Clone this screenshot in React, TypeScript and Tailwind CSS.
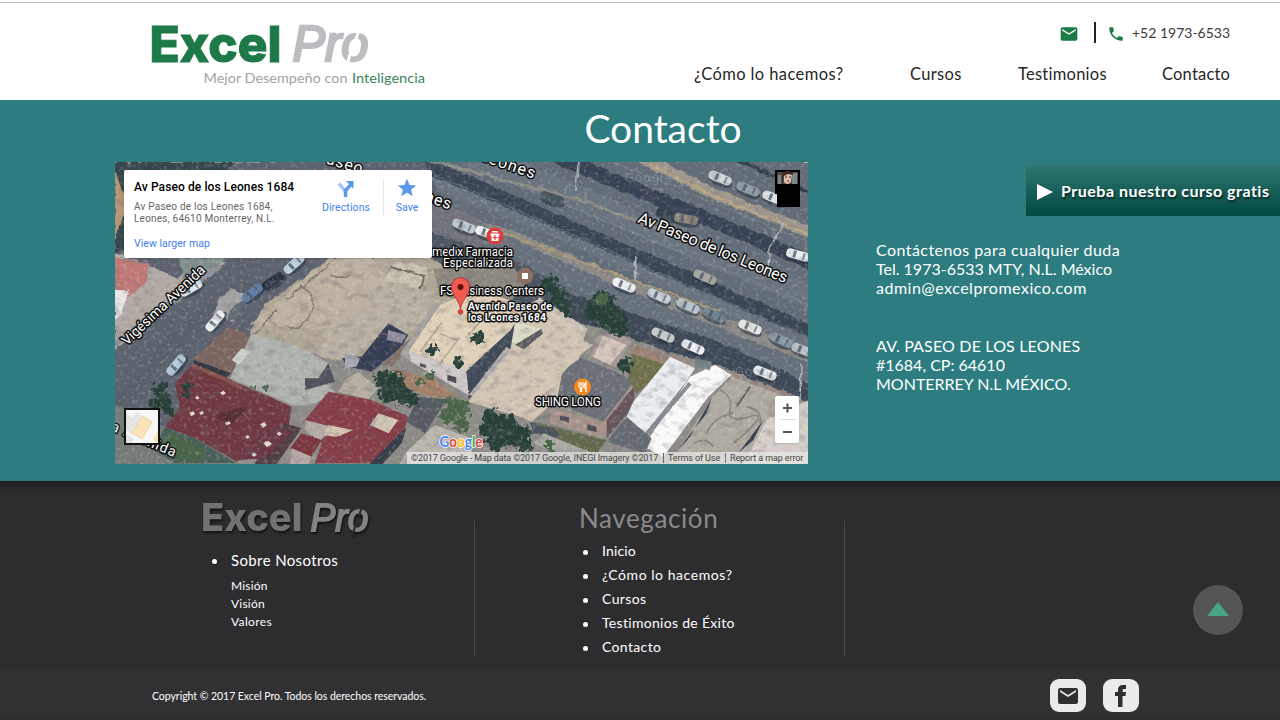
import React from "react";
import { MdEmail, MdPhone, MdStar } from "react-icons/md";

function Logo() {
  return (
    <svg width="276" height="70" viewBox="152 20 276 70" className="block overflow-visible" role="img" aria-label="Excel Pro">
      <text x="149.500" y="61.500" fontFamily="Inter, sans-serif" fontWeight="800" fontSize="49.500" fill="#1d7a48" stroke="#1d7a48" strokeWidth="1" textLength="132" lengthAdjust="spacingAndGlyphs">Excel</text>
      <text x="292.500" y="61" fontFamily="'Liberation Sans', sans-serif" fontStyle="italic" fontSize="50.500" fill="#bcbdc0" stroke="#bcbdc0" strokeWidth="2.600" textLength="76" lengthAdjust="spacingAndGlyphs">Pro</text>
      <path d="M359 30 L355 42 M350 54 L347 66" stroke="#fff" strokeWidth="3" />
      <text x="203.500" y="83" fontFamily="Lato, sans-serif" fontSize="14" fill="#a3a3a3" textLength="144" lengthAdjust="spacingAndGlyphs">Mejor Desempeño con</text>
      <text x="352" y="83" fontFamily="Lato, sans-serif" fontSize="14" fill="#3e8460" textLength="73" lengthAdjust="spacingAndGlyphs">Inteligencia</text>
    </svg>
  );
}

function FooterLogo() {
  return (
    <svg width="172" height="38" viewBox="200 498 172 38" className="block overflow-visible [filter:drop-shadow(1px_2px_1px_rgba(0,0,0,0.6))]" role="img" aria-label="Excel Pro">
      <text x="201" y="531" fontFamily="Inter, sans-serif" fontWeight="800" fontSize="38.500" fill="#727272" textLength="101.500" lengthAdjust="spacingAndGlyphs">Excel</text>
      <text x="310.500" y="531" fontFamily="'Liberation Sans', sans-serif" fontStyle="italic" fontSize="39" fill="#838383" stroke="#838383" strokeWidth="1.8" textLength="58" lengthAdjust="spacingAndGlyphs">Pro</text>
      <path d="M362 507 L359 516 M355 526 L353 535" stroke="#2d2d2f" strokeWidth="2.2" />
    </svg>
  );
}

const cars: [number, number, number, string][] = [
  [552, 198, 18, "#48575c"], [668, 214, 18, "#35424c"], [686, 219, 10, "#8c8579"],
  [720, 178, 22, "#d4d9dc"], [748, 189, 22, "#8f9ca3"], [774, 198, 22, "#dfe3e5"],
  [798, 255, 15, "#e8ebee"], [705, 277, 24, "#a5a49f"], [624, 285, 22, "#eef0f2"],
  [659, 296, 24, "#ccd4da"], [688, 306, 24, "#b9c4cc"], [714, 315, 24, "#718390"],
  [663, 335, 24, "#c5c9cb"], [693, 347, 24, "#edf0f2"], [750, 327, 22, "#e5e6e4"],
  [781, 340, 24, "#8b98a3"], [765, 373, 22, "#f0f2f3"], [464, 226, 22, "#bfc9d0"],
  [487, 233, 20, "#f2f3f3"], [803, 350, 20, "#b7c0c7"],
];

const leftCars: [number, number, number, string][] = [
  [191, 288, -30, "#e3e5e8"], [215, 321, -50, "#eceeef"], [176, 365, -50, "#b5cbd9"],
  [294, 264, -42, "#bed3df"], [252, 293, -38, "#5f7fa6"], [273, 281, -35, "#26303c"],
];

function Car({ x, y, a, c }: { x: number; y: number; a: number; c: string }) {
  return (
    <g transform={`translate(${x} ${y}) rotate(${a})`}>
      <ellipse cx="1" cy="3" rx="13" ry="5" fill="#20303d" opacity=".55" />
      <rect x="-12" y="-4.500" width="24" height="9" rx="4" fill={c} />
      <rect x="-5" y="-3.500" width="3" height="7" fill="#40515e" opacity=".75" />
      <rect x="5" y="-3.500" width="2" height="7" fill="#40515e" opacity=".6" />
    </g>
  );
}

function Trees({ points, color }: { points: number[][]; color: string }) {
  return (
    <g fill={color}>
      {points.map(([x, y, r], i) => (
        <circle key={i} cx={x} cy={y} r={r} />
      ))}
    </g>
  );
}

function Satellite() {
  return (
    <svg width="693" height="302" viewBox="115 162 693 302" className="block">
      <defs>
        <filter id="rough" x="0" y="0" width="100%" height="100%">
          <feTurbulence type="fractalNoise" baseFrequency="0.12" numOctaves="3" seed="4" result="n" />
          <feDisplacementMap in="SourceGraphic" in2="n" scale="5" xChannelSelector="R" yChannelSelector="G" />
          <feGaussianBlur stdDeviation=".4" />
        </filter>
        <filter id="leaf" x="-10%" y="-10%" width="120%" height="120%">
          <feTurbulence type="fractalNoise" baseFrequency="0.2" numOctaves="3" seed="9" result="n" />
          <feDisplacementMap in="SourceGraphic" in2="n" scale="14" xChannelSelector="R" yChannelSelector="G" />
        </filter>
        <filter id="grainDark" x="0" y="0" width="100%" height="100%">
          <feTurbulence type="fractalNoise" baseFrequency="0.09 0.14" numOctaves="5" seed="8" />
          <feColorMatrix values="0 0 0 0 0.14  0 0 0 0 0.13  0 0 0 0 0.16  0 3 0 0 -1.45" />
        </filter>
        <filter id="grainLight" x="0" y="0" width="100%" height="100%">
          <feTurbulence type="fractalNoise" baseFrequency="0.25" numOctaves="3" seed="21" />
          <feColorMatrix values="0 0 0 0 1  0 0 0 0 0.97  0 0 0 0 0.92  0 3 0 0 -1.6" />
        </filter>
      </defs>
      <g filter="url(#rough)">
        <rect x="105" y="152" width="713" height="322" fill="#8d8c87" />

        <path d="M300 152 H818 V420 L650 345 L540 290 L420 225 L280 175Z" fill="#626d78" />
        <path d="M470 152 L818 300" stroke="#6a7580" strokeWidth="24" />
        <path d="M360 152 L540 222 L818 345" fill="none" stroke="#6a7480" strokeWidth="18" />
        <path d="M385 147 L818 335" stroke="#384454" strokeWidth="14" />
        <path d="M545 152 L818 265" stroke="#374354" strokeWidth="14" />
        <path d="M722 152 L818 197" stroke="#33414c" strokeWidth="4" />
        <path d="M430 160 L580 200 L700 244" fill="none" stroke="#8c8c86" strokeWidth="3" />
        <path d="M630 152 L715 194 L818 235" fill="none" stroke="#a0988c" strokeWidth="11" />
        <path d="M630 154 L715 197 L818 238" fill="none" stroke="#c4a97f" strokeWidth="1.5" />
        <path d="M760 152 L818 165 V152Z" fill="#c5b499" />
        <path d="M430 150 L818 308 M430 172 L818 342 M590 152 L818 246" stroke="#8a959b" strokeWidth="1" opacity=".6" />
        <path d="M430 210 L515 238 L600 274 L690 310 L818 360" fill="none" stroke="#8b8a86" strokeWidth="12" />
        <path d="M500 232 L600 268 L720 312" fill="none" stroke="#ab9a7c" strokeWidth="2" />
        <path d="M500 243 L600 289 L818 380" fill="none" stroke="#66717c" strokeWidth="19" />
        <path d="M520 280 L590 300 L720 342 L818 388 V406 L700 362 L600 328 L525 310Z" fill="#3e4957" />
        <path d="M625 346 L720 370 L818 409" fill="none" stroke="#958a84" strokeWidth="8" />
        <path d="M578 162 L576 191 M784 223 L769 249 L768 272 M636 257 L634 280 M801 364 L800 400" fill="none" stroke="#b3b8ba" strokeWidth="1.5" />

        <path d="M115 162 H425 L460 240 L375 270 L270 330 L190 400 L145 464 H105 V162Z" fill="#5c646e" />
        <path d="M115 162 H235 L150 235 L115 255Z" fill="#354448" />
        <path d="M115 170 L127 205 L115 240Z" fill="#b39472" />
        <path d="M340 162 L470 215 L520 247 L450 242 L410 230Z" fill="#6f737a" />
        <path d="M432 232 L530 268 L560 290 L520 320 L430 275Z" fill="#4c5561" />
        <path d="M115 253 L150 266 L178 278 L200 260 L225 262 L115 350Z" fill="#b1aaa4" />
        <path d="M115 257 L148 264 L146 282 L115 308Z" fill="#c07a76" />
        <path d="M115 290 L130 290 L120 315 L115 320Z" fill="#e8e6e9" />
        <path d="M178 258 H226 L215 267 L185 280Z" fill="#7f908e" />
        <path d="M115 345 L175 300 L220 265" stroke="#8e9296" strokeWidth="6" fill="none" />
        <path d="M115 410 L170 345 L250 282" stroke="#58616c" strokeWidth="15" fill="none" />
        <path d="M115 405 L200 442 L210 464 H105Z" fill="#767b79" />

        <path d="M330 258 H432 L465 283 L455 314 L392 350 L331 360 L250 334 L264 305 L306 276Z" fill="#b0a797" />
        <path d="M322 264 L370 255 L389 282 L345 330 L250 325Z" fill="#beb3a2" />
        <path d="M370 292 L392 282 L437 292 L420 325 L384 349 L322 335Z" fill="#b9b0a3" />
        <path d="M382 282 L396 261 L426 267 L427 278 L419 291 L397 282Z" fill="#cbc2b2" />
        <path d="M390 267 L425 276 L420 289" fill="none" stroke="#6c6960" strokeWidth="2" />
        <path d="M286 300 L330 264 M276 310 L250 340 M300 285 q20 10 10 30 t-25 10 M330 275 q15 5 20 0" fill="none" stroke="#817a70" strokeWidth="1.5" />
        <path d="M218 300 L232 289 L247 297 L232 322 L215 313Z" fill="#a0a3a2" />
        <path d="M232 308 L247 297 L238 316 L228 322Z" fill="#646c70" />
      </g>

      <g filter="url(#rough)" transform="translate(115 310) scale(.33333)">
        <path d="M340 50 L410 78 L350 190 L235 148Z" fill="#7b6561" />
        <path d="M235 150 L350 190 L335 203 L240 172Z" fill="#353840" />
        <path d="M410 70 L555 110 L640 160 L610 205 L660 245 L600 280 L540 288 L345 205Z" fill="#b0b4ae" />
        <path d="M350 150 L380 115 L405 125 L372 165Z" fill="#cbd0ca" />
        <path d="M640 160 L660 215 L570 240 L570 205 L610 205Z" fill="#4d535b" />
        <path d="M600 130 L680 30 L730 0 H940 L870 75 L820 45 L730 130 L680 150Z" fill="#b9b0a3" />
        <path d="M820 40 L880 75 L860 110 L770 185 L700 170 L680 145 L740 140Z" fill="#343c53" />
        <path d="M820 60 L875 75 L860 100 L815 90Z" fill="#8f8a9a" />
        <path d="M690 130 L735 145 L725 170 L690 175Z" fill="#a5a6af" />
        <path d="M880 90 L960 10 L975 25 L830 170 L800 165Z" fill="#85716c" />
        <path d="M230 165 L335 205 L440 250 L530 290 L520 355 L430 420 L365 455 L250 390 L150 350 L195 290 L180 220Z" fill="#70393f" />
        <path d="M230 165 L325 205 L380 235" fill="none" stroke="#85534f" strokeWidth="12" />
        <path d="M320 305 L385 290 L395 295 L355 340 L305 325" fill="#5a2d36" />
        <path d="M510 340 L560 355 L485 462 H420 L450 395Z" fill="#513c42" />
        <path d="M440 355 L530 365 L450 445 L370 450Z" fill="#6b3943" />
        <path d="M690 210 L730 185 L790 235 L760 267 L670 245Z" fill="#b6aea1" />
        <path d="M640 245 L770 270 L880 320 L860 380 L790 460 H600 L620 400 L570 330Z" fill="#853c46" />
        <path d="M570 330 L650 350 L615 395 L570 360Z" fill="#b5ada5" />
        <path d="M640 345 L715 360 L665 380 L625 376Z" fill="#d4c5b2" />
        <path d="M790 310 L850 330 L820 370 L765 345Z" fill="#d0c4b5" />
        <path d="M560 370 L620 390 L590 440 L525 415Z" fill="#7b343e" />
        <path d="M530 415 L590 440 L580 465 H525Z" fill="#b5a8a5" />
        <path d="M875 350 L860 400 L800 465 H760Z" fill="#353d48" />
        <path d="M835 175 L960 210 L1030 260 L960 265 L870 235Z" fill="#a48169" />
        <path d="M910 260 L995 268 L930 370 L875 335Z" fill="#555a61" />
        <path d="M960 345 L1070 385 V480 H845 L870 430Z" fill="#bbb7af" />
        <path d="M150 350 L250 390 L365 460 H180 L115 420Z" fill="#48605a" />
        <g fill="#e3d9ce">
          <path d="M315 248l10-6 8 8-10 6zM240 262l8-4 6 7-8 4zM222 310l12-6 7 7-12 8zM252 308l10-5 6 6-10 7zM330 338l13-4 4 7-12 5zM390 380l8-5 7 7-8 5zM410 432l7-5 9 7-9 6zM485 370l8-5 8 6-8 7zM445 400l14-8 12 9-15 11zM435 343l12-6 8 8-10 9z" />
        </g>
      </g>

      <g filter="url(#rough)" transform="translate(460 310) scale(.33333)">
        <path d="M150 110 L250 50 L400 105 L340 150 L290 270 L215 335 L30 255Z" fill="#d0c2b1" />
        <path d="M410 80 L460 65 L515 95 L465 170 L390 140Z" fill="#a89a96" />
        <path d="M430 77 L500 105 L450 165 L400 140Z" fill="#d3c6bb" />
        <path d="M350 138 L525 210 L430 335 L290 280 L305 195Z" fill="#6c7079" />
        <path d="M270 295 L430 335 L525 215 L520 255 L440 385 L270 340Z" fill="#a8948d" />
        <path d="M525 225 L520 290 L440 385 V330Z" fill="#67555b" />
        <path d="M300 317l27 5v16l-27-8zM382 343l28 7v16l-28-6z" fill="#4b4b55" />
        <path d="M515 130 L620 160 L570 220 L530 250 L505 205Z" fill="#70704c" />
        <path d="M530 105 L635 145 L620 165 L510 130Z" fill="#9b8373" />
        <path d="M630 140 L705 175 L675 220 L555 370 L495 330 L520 275Z" fill="#eaeef0" />
        <path d="M690 200 L765 165 L815 195 L745 260 L610 440 L550 410Z" fill="#fafafa" />
        <path d="M690 220 L580 350 L560 370" fill="none" stroke="#858c92" strokeWidth="12" />
        <path d="M500 320 L575 385 L555 430 L440 395Z" fill="#656b72" />
        <path d="M705 145 L755 155 L750 180 L705 170Z" fill="#758283" />
        <path d="M815 200 L1070 295 V480 H610 L680 380 L755 265Z" fill="#b0aba2" />
        <path d="M1070 260 L920 330 L850 465 H1070Z" fill="#d6cec9" />
        <path d="M755 265 L690 380 L645 430 L740 310Z M910 330 L880 390 L835 430Z" fill="#39414b" />
        <path d="M870 230 L830 290" stroke="#66645e" strokeWidth="6" />
        <path d="M780 240 q40 20 30 60 t60 20 t-50 80 M820 310 q-60 10 -80 60 M860 290 q50 10 40 50 M700 400 q40 -20 60 10" fill="none" stroke="#8a867e" strokeWidth="5" />
        <path d="M220 335 L440 390 L410 430 L290 400Z" fill="#63694c" />
        <path d="M210 335 L290 360 L300 385 L220 370Z" fill="#4c525d" />
        <path d="M250 370 L390 425 H280 L220 400Z" fill="#aaa8a3" />
      </g>

      <g filter="url(#rough)" transform="translate(115 162) scale(.442 .33333)">
        <path d="M720 320 L900 310 L930 380 L870 440 L735 400Z" fill="#8d887f" />
        <path d="M890 545 L870 470 L960 410 L1065 510 L1050 590 L1000 640 L990 710 L945 775 L800 720Z" fill="#d2c5b4" />
        <path d="M885 500 L905 480 L965 500 L930 550 L890 540Z" fill="#dcdcc8" />
        <path d="M905 548 L965 500 L968 515 L925 562Z" fill="#5a5c5e" />
        <path d="M960 405 L1070 500 L1065 515 L955 420Z" fill="#c8c1b7" />
        <path d="M795 625 L905 480 L895 560 L800 712Z" fill="#3f4858" />
        <path d="M885 555 L895 562 L812 700 L800 700Z" fill="#b6b2b2" />
        <path d="M870 405 L930 430 L895 505 L795 627 L664 567 L735 430 L785 400Z" fill="#e0d1ba" />
        <path d="M868 412 L928 436 L905 455 L850 430Z" fill="#caa995" />
        <path d="M664 567 L795 627 L800 700 L670 600Z" fill="#cfcac7" />
        <path d="M690 570 L740 480 M735 605 L775 535 L735 515 M800 520 L850 440" fill="none" stroke="#b8a993" strokeWidth="4" />
        <path d="M752 638l20 8v18l-20-9zM690 603l14 6v10l-14-6z" fill="#4d4a56" />
        <path d="M645 575 L725 420 L735 428 L664 567 L670 600Z" fill="#a6a29f" />
      </g>

      <g filter="url(#leaf)">
        <Trees color="#273f38" points={[[187, 384, 4], [187, 392, 5], [163, 385, 4], [158, 390, 6], [165, 398, 7], [155, 405, 7], [168, 410, 6], [383, 380, 9], [393, 385, 12], [387, 393, 9], [401, 394, 10], [412, 398, 8], [433, 350, 5], [477, 338, 6], [458, 363, 5], [491, 418, 9], [505, 425, 12], [489, 431, 10], [512, 435, 12], [522, 435, 9], [497, 442, 9], [525, 445, 8], [597, 311, 12], [612, 317, 13], [603, 301, 11], [618, 327, 9], [560, 297, 9], [550, 285, 9], [566, 308, 7], [625, 366, 7]]} />
        <Trees color="#4a6547" points={[[453, 405, 8], [448, 415, 8], [463, 410, 8], [461, 424, 7], [172, 440, 8], [185, 450, 11], [198, 453, 8], [252, 388, 3], [265, 388, 3], [420, 382, 5], [598, 302, 5], [603, 298, 5], [550, 446, 5], [430, 376, 4]]} />
      </g>

      <g>
        {cars.map(([x, y, a, c], i) => (
          <Car key={i} x={x} y={y} a={a} c={c} />
        ))}
        {leftCars.map(([x, y, a, c], i) => (
          <Car key={i} x={x} y={y} a={a} c={c} />
        ))}
      </g>
      <rect x="115" y="162" width="693" height="302" filter="url(#grainDark)" opacity=".32" />
      <rect x="115" y="162" width="693" height="302" filter="url(#grainLight)" opacity=".22" />

      <g fontFamily="Roboto, sans-serif" fill="#fff" stroke="#111" paintOrder="stroke" strokeLinejoin="round" strokeWidth="3">
        <text transform="translate(637 222) rotate(22.500)" fontSize="16" textLength="160">Av Paseo de los Leones</text>
        <text transform="translate(450 150) rotate(19)" fontSize="16" textLength="88">los Leones</text>
        <text transform="translate(315 160) rotate(17)" fontSize="16" textLength="48">Paseo</text>
        <text transform="translate(384 187) rotate(19)" fontSize="16" textLength="69">s Leones</text>
        <text transform="translate(127 346) rotate(-43.500)" fontSize="14" textLength="109">Vigésima Avenida</text>
        <text transform="translate(103 427) rotate(23)" fontSize="14" textLength="77">za Avenida</text>
        <g fontSize="12">
          <text x="432" y="255.500" textLength="81">medix Farmacia</text>
          <text x="443" y="267" textLength="70">Especializada</text>
          <text x="440" y="295" textLength="104">FS Business Centers</text>
          <text x="535" y="406" textLength="66">SHING LONG</text>
        </g>
        <g fontSize="10.500" fontWeight="700">
          <text x="468" y="310" textLength="84">Avenida Paseo de</text>
          <text x="468" y="321" textLength="78">los Leones 1684</text>
        </g>
      </g>
      <g fontFamily="Roboto, sans-serif" fontSize="13" fill="#a5b6c0" opacity=".35">
        <text x="625" y="182" letterSpacing="1">Google</text>
        <text x="735" y="376" letterSpacing="1">Google</text>
      </g>

      <circle cx="495" cy="236" r="8.500" fill="#e0393a" />
      <path d="M490.500 233.500h9v2l-1 1v4.500h-7v-4.500l-1-1zM492 231h6v1.500h-6z" fill="#fff" />
      <path d="M495 235v5M492.500 237.500h5" stroke="#e0393a" strokeWidth="1.2" />
      <circle cx="525" cy="276" r="8.300" fill="#8d6e63" />
      <rect x="522" y="273" width="6" height="6" fill="#fff" />
      <circle cx="582.500" cy="387" r="8.500" fill="#f5871f" />
      <path d="M579 382v4q0 1.500 1.500 1.500V392M581 382v4M583 382v4q0 1.500-1.500 1.500V392M586 392v-10q-2 2-2 6h2" stroke="#fff" strokeWidth="1.2" fill="none" />

      <path d="M460.500 309 C459.500 300 451.500 296 451.500 286.500 a9 9 0 0 1 18 0 C469.500 296 461.500 300 460.500 309Z" fill="#f15a4e" stroke="#a52a28" strokeWidth=".8" />
      <circle cx="460.500" cy="287" r="3" fill="#5b1310" />
      <circle cx="460.500" cy="312" r="2.400" fill="#ea4335" stroke="#8f2421" strokeWidth=".6" />

      <text x="439.500" y="447" fontFamily="Lato, sans-serif" fontSize="15" fontWeight="700" textLength="43" lengthAdjust="spacingAndGlyphs" stroke="#fff" strokeWidth="1.500" paintOrder="stroke">
        <tspan fill="#4285f4">G</tspan><tspan fill="#ea4335">o</tspan><tspan fill="#fbbc05">o</tspan><tspan fill="#4285f4">g</tspan><tspan fill="#34a853">l</tspan><tspan fill="#ea4335">e</tspan>
      </text>
    </svg>
  );
}

function MapPanel() {
  return (
    <div className="relative h-[302px] w-[693px] overflow-hidden font-[Roboto,sans-serif]">
      <Satellite />
      <div className="absolute left-[9px] top-2 flex h-[88px] w-[308px] rounded-[2px] bg-white shadow">
        <div className="w-[190px] whitespace-nowrap pl-[10px] pt-[10px]">
          <div className="text-[12px] font-medium leading-[15px] tracking-[0.1px] text-black">Av Paseo de los Leones 1684</div>
          <div className="mt-[6px] text-[10px] leading-3 tracking-[0.22px] text-[#666]">
            Av Paseo de los Leones 1684,<br />Leones, 64610 Monterrey, N.L.
          </div>
          <div className="mt-[13px] text-[10.500px] leading-3 tracking-[0.03px] text-[#427fed]">View larger map</div>
        </div>
        <div className="flex flex-1 pt-[9px] text-[10.500px] leading-3 text-[#427fed]">
          <div className="mr-[5px] flex w-[64px] flex-col items-center">
            <svg width="18" height="18" viewBox="0 0 18 18">
              <path d="M8 12L2 4.500" stroke="#a6c5f5" strokeWidth="3.500" fill="none" />
              <path d="M8.500 18V11.500L13.500 6" stroke="#5c98ea" strokeWidth="3.500" fill="none" />
              <path d="M9 2h7.500v8z" fill="#5c98ea" />
            </svg>
            <div className="mt-[5px] tracking-[0.1px]">Directions</div>
          </div>
          <div className="h-9 w-px bg-[#e5e5e5]" />
          <div className="flex w-[46px] flex-col items-center">
            <MdStar className="-mt-[2px] size-[22px] text-[#5c98ea]" />
            <div className="mt-[3px]">Save</div>
          </div>
        </div>
      </div>
      <div className="absolute left-[660px] top-[8px]">
        <svg width="26" height="38" viewBox="0 0 26 38">
          <path d="M0 0h25v14h0v23H2V24H0z" fill="#000" />
          <path d="M2 2h21v12H2z" fill="#4b4a48" />
          <path d="M17 3h5v11h-5zM3 5h3v9H3z" fill="#7c8588" />
          <path d="M8 4q5-3 9 0l-1 8q-4 4-7 0z" fill="#dcbba8" />
          <path d="M7 3q5-4 11 0v2l-5-1-4 2-1 7H7z" fill="#3f2a25" />
          <path d="M10 7h2M14 7h2M12 11h2" stroke="#48322c" />
        </svg>
      </div>
      <div className="absolute left-[9px] top-[246px]">
        <svg width="36" height="37" viewBox="0 0 36 37">
          <rect x="1" y="1" width="34" height="35" fill="#f7f7f7" stroke="#111" strokeWidth="2" />
          <path d="M2 5l7 6-7 12zM12 4l6 4-10 19-6-5zM2 26l8 5-2 4H2z" fill="#e4e4e4" />
          <path d="M19 8l9 6-10 17-10-6z" fill="#fae3b8" stroke="#f0d49c" />
          <path d="M30 29l4-6v11h-4z" fill="#fae3b8" />
        </svg>
      </div>
      <div className="absolute left-[660px] top-[234px] flex h-[47px] w-6 flex-col items-center rounded-[2px] bg-white shadow">
        <svg width="24" height="47" viewBox="0 0 24 47">
          <path d="M12.500 7.500v9M8 12h9M8 36h9" stroke="#555" strokeWidth="2" />
          <path d="M4 23.500h17" stroke="#ddd" />
        </svg>
      </div>
      <div className="absolute bottom-0 right-0 flex h-3 w-[401px] items-center whitespace-nowrap bg-[#e8e8e6]/75 pl-1 text-[9px] leading-3 text-[#444]">
        <span className="w-[248px] tracking-[-0.115px]">©2017 Google - Map data ©2017 Google, INEGI Imagery ©2017</span>
        <span className="mx-[4px] h-[10px] w-px bg-[#666]" />
        <span className="w-[53px] tracking-[-0.1px]">Terms of Use</span>
        <span className="mx-[4px] h-[10px] w-px bg-[#777]" />
        <span className="tracking-[-0.1px]">Report a map error</span>
      </div>
    </div>
  );
}

const navItems = [
  { label: "Inicio", tracking: "tracking-[0.15px]" },
  { label: "¿Cómo lo hacemos?", tracking: "tracking-[0.55px]" },
  { label: "Cursos", tracking: "tracking-[0.4px]" },
  { label: "Testimonios de Éxito", tracking: "tracking-[0.3px]" },
  { label: "Contacto", tracking: "tracking-[0.35px]" },
];

function NavList() {
  return (
    <ul className="mt-[6px] text-[14px] leading-6 text-white">
      {navItems.map(({ label, tracking }) => (
        <li key={label} className="flex items-center pl-1">
          <span className="mr-[14px] mt-[3px] size-[5px] rounded-full bg-white" />
          <span className={tracking}>{label}</span>
        </li>
      ))}
    </ul>
  );
}

export default function App() {
  return (
    <div className="flex h-[720px] w-[1280px] flex-col overflow-hidden bg-white font-[Lato,sans-serif]">
      <div className="mt-[2px] h-px bg-[#bdbfbf]" />
      <header className="flex h-[97px] justify-between pl-[152px] pr-[50px]">
        <div className="pt-[17px]"><Logo /></div>
        <div className="flex flex-col items-end whitespace-nowrap text-[#262626]">
          <div className="mt-[19px] flex h-[21px] items-center">
            <MdEmail className="mt-[2px] size-5 text-[#1d7a48]" />
            <span className="ml-[15px] h-[21px] w-[2px] bg-[#222]" />
            <MdPhone className="ml-[11px] mt-[2px] size-[18px] text-[#1d7a48]" />
            <span className="ml-[7px] w-[98px] text-[14px] text-[#3a3a3a]">+52 1973-6533</span>
          </div>
          <nav className="mt-[19px] flex text-[16.500px] leading-6">
            <a className="w-[216px] tracking-[0.4px]">¿Cómo lo hacemos?</a>
            <a className="w-[108px] tracking-[0.35px]">Cursos</a>
            <a className="w-[144px] tracking-[0.25px]">Testimonios</a>
            <a className="w-[68px] tracking-[0.2px]">Contacto</a>
          </nav>
        </div>
      </header>

      <main className="flex h-[381px] flex-col bg-[#2d7d80] text-white">
        <h1 className="flex h-[62px] items-center justify-center pb-[5px] pl-[46px] text-[39px] leading-none">Contacto</h1>
        <div className="flex pl-[115px]">
          <MapPanel />
          <div className="flex flex-1 flex-col pl-[68px]">
            <button className="mt-[4px] flex h-[50px] w-[254px] items-center gap-2 self-end whitespace-nowrap bg-linear-to-b from-[#2c766f] to-[#004943] pl-[11px] text-[16px] font-bold [text-shadow:1px_2px_2px_rgba(0,0,0,0.6)]">
              <svg width="16" height="16" viewBox="0 0 16 16" className="mt-[2px]"><path d="M0 0L16 8L0 16z" fill="#fff" /></svg>
              <span className="-mt-px tracking-[0.5px]">Prueba nuestro curso gratis</span>
            </button>
            <div className="mt-[24px] whitespace-nowrap text-[16px] leading-[19.200px]">
              <p className="tracking-[0.44px]">Contáctenos para cualquier duda</p>
              <p>Tel. 1973-6533 MTY, N.L. México</p>
              <p className="tracking-[0.5px]">admin@excelpromexico.com</p>
              <p className="mt-[38px] tracking-[0.16px]">AV. PASEO DE LOS LEONES</p>
              <p>#1684, CP: 64610</p>
              <p>MONTERREY N.L MÉXICO.</p>
            </div>
          </div>
        </div>
      </main>

      <footer className="flex flex-1 flex-col bg-[#2d2d2f]">
        <div className="flex h-[189px] bg-linear-to-b from-[#1d1d1f] via-[#2d2d2f] via-6% to-[#2d2d2f] pl-[200px]">
          <section className="mt-10 h-[136px] w-[275px] border-r border-[#4b4b4d] text-white">
            <div className="-mt-[23px]"><FooterLogo /></div>
            <div className="mt-[12px] flex items-center pl-[12px] text-[15px] leading-6 tracking-[0.37px]">
              <span className="mr-[14px] mt-[3px] size-[5px] rounded-full bg-white" />
              Sobre Nosotros
            </div>
            <div className="mt-[5px] pl-[31px] text-[12px] leading-[18px] tracking-[0.2px]">
              <p>Misión</p><p>Visión</p><p className="tracking-[0.35px]">Valores</p>
            </div>
          </section>
          <section className="mt-10 h-[136px] w-[370px] border-r border-[#4b4b4d] pl-[104px]">
            <h2 className="-mt-[18px] text-[26px] leading-[30px] tracking-[0.6px] text-[#8a8a8a]">Navegación</h2>
            <NavList />
          </section>
          <button className="ml-[348px] mt-[104px] flex size-[50px] items-center justify-center rounded-full bg-[#555]" aria-label="Arriba">
            <svg width="22" height="14" viewBox="0 0 22 14" className="-mt-[2px]"><path d="M11 0L22 14H0z" fill="#4aa586" /></svg>
          </button>
        </div>
        <div className="flex h-12 items-center bg-[#313133] pl-[152px]">
          <span className="mt-[5px] w-[898px] text-[10.500px] tracking-[-0.04px] text-white">Copyright © 2017 Excel Pro. Todos los derechos reservados.</span>
          <span className="mt-[3px] flex h-[33px] w-9 items-center justify-center rounded-[9px] bg-[#ebebeb]">
            <MdEmail className="size-6 text-[#2f2f2f]" />
          </span>
          <span className="ml-[17px] mt-[3px] flex h-[33px] w-9 items-center justify-center rounded-[9px] bg-[#ebebeb]">
            <svg width="11" height="22" viewBox="0 0 11 22" className="ml-[-1px]"><path d="M3 22V11H0V7h3V5Q3 0 8 0h3v4H9Q7.500 4 7.500 5.500V7H11L10.500 11H7.500v11z" fill="#2f2f2f" /></svg>
          </span>
        </div>
      </footer>
    </div>
  );
}
